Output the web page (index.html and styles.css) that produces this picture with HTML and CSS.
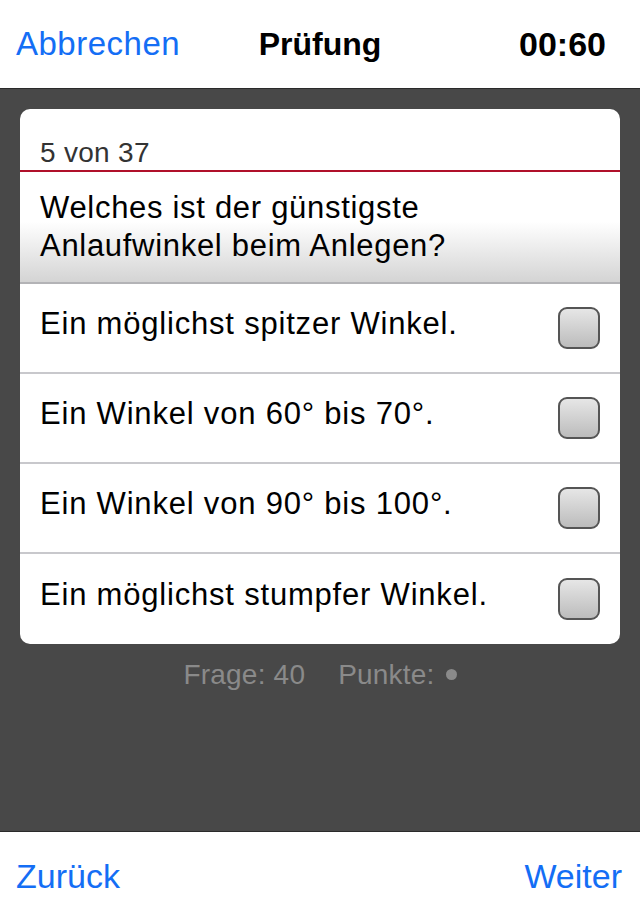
FILE: index.html
```html
<!DOCTYPE html>
<html lang="de">
<head>
  <meta charset="UTF-8">
  <meta name="viewport" content="width=device-width, initial-scale=1.0">
  <title>Prüfung</title>
  <link rel="stylesheet" href="styles.css">
</head>
<body>
  <div class="screen">
    <header class="topbar">
      <a class="nav-link left">Abbrechen</a>
      <div class="title">Prüfung</div>
      <div class="timer">00:60</div>
    </header>

    <main class="stage">
      <div class="card">
        <div class="counter">5 von 37</div>
        <div class="question">Welches ist der günstigste<br>Anlaufwinkel beim Anlegen?</div>

        <div class="answer">
          <span class="answer-text">Ein möglichst spitzer Winkel.</span>
          <span class="check"></span>
        </div>
        <div class="answer">
          <span class="answer-text">Ein Winkel von 60° bis 70°.</span>
          <span class="check"></span>
        </div>
        <div class="answer">
          <span class="answer-text">Ein Winkel von 90° bis 100°.</span>
          <span class="check"></span>
        </div>
        <div class="answer">
          <span class="answer-text">Ein möglichst stumpfer Winkel.</span>
          <span class="check"></span>
        </div>
      </div>

      <div class="stats">
        <span>Frage: 40</span>
        <span>Punkte: <span class="dot"></span></span>
      </div>
    </main>

    <footer class="bottombar">
      <a class="nav-link">Zurück</a>
      <a class="nav-link">Weiter</a>
    </footer>
  </div>
</body>
</html>
```

FILE: styles.css
```css
html, body {
  margin: 0;
  padding: 0;
}

body {
  font-family: "Liberation Sans", Arial, sans-serif;
  background: #fff;
}

.screen {
  width: 640px;
  height: 920px;
  display: flex;
  flex-direction: column;
}

.topbar {
  height: 88px;
  border-bottom: 1px solid #2a2a2a;
  display: grid;
  grid-template-columns: 1fr auto 1fr;
  align-items: center;
  padding: 0 16px;
  background: #fff;
}

.nav-link {
  color: #146ef5;
  font-size: 33px;
  letter-spacing: 0.5px;
  text-decoration: none;
}

.title {
  font-size: 32px;
  font-weight: bold;
  color: #000;
}

.timer {
  justify-self: end;
  margin-right: 18px;
  font-size: 34px;
  font-weight: bold;
  color: #000;
}

.stage {
  flex: 1;
  background: #484848;
  padding: 20px 20px 0;
}

.card {
  background: #fff;
  border-radius: 10px;
  overflow: hidden;
}

.counter {
  font-size: 28px;
  line-height: 32px;
  letter-spacing: 0.3px;
  color: #333;
  padding: 28px 20px 1px;
  border-bottom: 2px solid #b0102a;
}

.question {
  font-size: 31px;
  line-height: 38px;
  letter-spacing: 0.7px;
  color: #000;
  padding: 17px 20px 17px;
  background: linear-gradient(#fff 0%, #fff 45%, #d4d4d4 100%);
  border-bottom: 2px solid #b3b3b6;
}

.answer {
  height: 88px;
  display: flex;
  align-items: center;
  justify-content: space-between;
  padding: 0 20px;
  border-bottom: 2px solid #c8c8cc;
}

.answer:last-child {
  border-bottom: none;
  height: 90px;
}

.answer-text {
  font-size: 31px;
  line-height: 38px;
  letter-spacing: 0.8px;
  color: #000;
  padding-bottom: 8px;
}

.check {
  width: 38px;
  height: 38px;
  border: 2px solid #555;
  border-radius: 9px;
  background: linear-gradient(#e6e6e6, #bcbcbc);
}

.stats {
  margin-top: 15px;
  display: flex;
  justify-content: center;
  gap: 33px;
  font-size: 28px;
  line-height: 32px;
  letter-spacing: 0.2px;
  color: #8a8a8a;
}

.dot {
  display: inline-block;
  width: 11px;
  height: 11px;
  margin-left: 3px;
  border-radius: 50%;
  background: #8a8a8a;
  vertical-align: 4px;
}

.bottombar {
  height: 88px;
  border-top: 1px solid #2a2a2a;
  display: flex;
  align-items: center;
  justify-content: space-between;
  padding: 0 18px 0 16px;
  background: #fff;
}

.bottombar .nav-link {
  font-size: 34px;
  letter-spacing: 0;
}
```
